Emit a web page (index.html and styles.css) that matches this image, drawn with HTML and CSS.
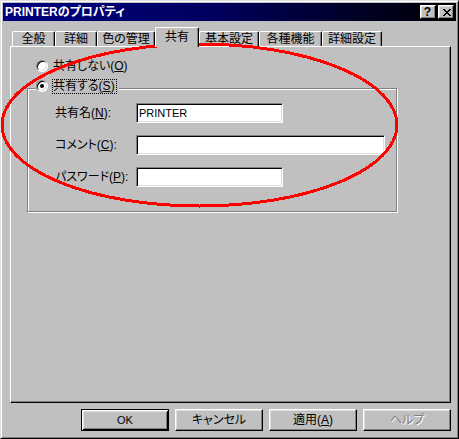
FILE: index.html
```html
<!DOCTYPE html>
<html lang="ja">
<head>
<meta charset="utf-8">
<title>PRINTERのプロパティ</title>
<link rel="stylesheet" href="styles.css">
</head>
<body>
<div class="window">
  <div class="titlebar">
    <span class="title">PRINTERのプロパティ</span>
    <div class="caption-buttons">
      <span class="cap-btn cap-help">?</span>
      <span class="cap-btn cap-close"><svg width="8" height="7" viewBox="0 0 8 7"><path fill="#000" d="M0 0h2v1H0zM6 0h2v1H6zM1 1h2v1H1zM5 1h2v1H5zM2 2h4v1H2zM3 3h2v1H3zM2 4h4v1H2zM1 5h2v1H1zM5 5h2v1H5zM0 6h2v1H0zM6 6h2v1H6z"/></svg></span>
    </div>
  </div>
  <div class="dialog-body">
    <div class="tabs">
      <span class="tab tab-general">全般</span>
      <span class="tab tab-detail">詳細</span>
      <span class="tab tab-color">色の管理</span>
      <span class="tab tab-share selected">共有</span>
      <span class="tab tab-basic">基本設定</span>
      <span class="tab tab-features">各種機能</span>
      <span class="tab tab-advanced">詳細設定</span>
    </div>
    <div class="panel">
      <div class="radio-row">
        <span class="radio"></span>
        <span class="radio-label">共有しない(<u>O</u>)</span>
      </div>
      <div class="group">
        <div class="legend">
          <span class="radio"><span class="dot"></span></span>
          <span class="radio-label focus">共有する(<u>S</u>)</span>
        </div>
        <div class="fields">
          <span class="field-label">共有名(<u>N</u>):</span>
          <span class="edit edit-short">PRINTER</span>
          <span class="field-label">コメント(<u>C</u>):</span>
          <span class="edit edit-long"></span>
          <span class="field-label">パスワード(<u>P</u>):</span>
          <span class="edit edit-short"></span>
        </div>
      </div>
    </div>
    <div class="buttons">
      <span class="btn default"><span class="latin">OK</span></span>
      <span class="btn">キャンセル</span>
      <span class="btn">適用(<u>A</u>)</span>
      <span class="btn disabled">ヘルプ</span>
    </div>
  </div>
  <svg class="annotation" width="459" height="439" viewBox="0 0 459 439">
    <ellipse cx="199.5" cy="125" rx="197.5" ry="81" fill="none" stroke="#ff0000" stroke-width="3" shape-rendering="crispEdges"/>
  </svg>
</div>
</body>
</html>
```

FILE: styles.css
```css
* {
  box-sizing: border-box;
}

html, body {
  margin: 0;
  padding: 0;
  background: #c0c0c0;
}

body {
  font-family: "Liberation Sans", "Noto Sans CJK JP", sans-serif;
  font-size: 12px;
  line-height: 14px;
  color: #000;
  font-feature-settings: "palt";
}

u {
  text-decoration: underline;
  text-underline-offset: 1px;
}

.window {
  position: relative;
  width: 459px;
  height: 439px;
  background: #c0c0c0;
  border: 1px solid;
  border-color: #dfdfdf #000 #000 #dfdfdf;
  box-shadow: inset 1px 1px #fff, inset -1px -1px #808080;
  padding: 2px;
  overflow: hidden;
}

.titlebar {
  height: 18px;
  display: flex;
  align-items: center;
  justify-content: space-between;
  padding: 0 2px 0 2px;
  background: linear-gradient(to right, #000080 0%, #000060 45%, #000000 100%);
}

.title {
  color: #fff;
  font-weight: bold;
  font-size: 12px;
  line-height: 14px;
  white-space: nowrap;
}

.caption-buttons {
  display: flex;
  gap: 2px;
}

.cap-btn {
  width: 16px;
  height: 14px;
  background: #c0c0c0;
  border: 1px solid;
  border-color: #fff #000 #000 #fff;
  box-shadow: inset -1px -1px #808080, inset 1px 1px #dfdfdf;
  display: flex;
  align-items: center;
  justify-content: center;
}

.cap-help {
  font-family: "Liberation Sans", sans-serif;
  font-weight: bold;
  font-size: 12px;
  line-height: 12px;
  padding-right: 1px;
}

.cap-close svg {
  display: block;
  margin-left: 1px;
}

.dialog-body {
  padding: 0 5px 0 7px;
}

.tabs {
  display: flex;
  align-items: flex-end;
  height: 19px;
  margin-top: 6px;
  padding-left: 2px;
}

.tab {
  position: relative;
  height: 15px;
  display: flex;
  align-items: center;
  justify-content: center;
  background: #c0c0c0;
  border-top: 1px solid #fff;
  border-left: 1px solid #fff;
  border-right: 1px solid #000;
  border-radius: 2px 2px 0 0;
  box-shadow: inset -1px 0 #808080;
  white-space: nowrap;
  line-height: 13px;
}

.tab.selected {
  height: 20px;
  margin-bottom: -1px;
  z-index: 1;
  padding-bottom: 1px;
}

.tab-general { width: 43px; }
.tab-detail { width: 42px; }
.tab-color { width: 58px; }
.tab-share { width: 44px; }
.tab-basic { width: 60px; }
.tab-features { width: 63px; }
.tab-advanced { width: 60px; }

.panel {
  height: 357px;
  border: 1px solid;
  border-color: #fff #000 #000 #fff;
  box-shadow: inset -1px -1px #808080;
  padding: 11px 0 0 16px;
}

.radio-row {
  display: flex;
  align-items: center;
  height: 16px;
  padding-left: 9px;
  gap: 4px;
}

.radio {
  width: 12px;
  height: 12px;
  flex: none;
  border-radius: 50%;
  border: 1px solid;
  border-color: #808080 #fff #fff #808080;
  box-shadow: inset 1px 1px #000, inset -1px -1px #dfdfdf;
  background: #fff;
  display: flex;
  align-items: center;
  justify-content: center;
}

.dot {
  width: 4px;
  height: 4px;
  border-radius: 50%;
  background: #000;
}

.radio-label {
  border: 1px solid transparent;
  padding: 0 1px 0 0;
  height: 15px;
  display: flex;
  align-items: center;
  white-space: nowrap;
}

.radio-label.focus {
  border: 1px dotted #000;
}

.group {
  width: 370px;
  height: 124px;
  margin-top: 14px;
  border: 1px solid #808080;
  box-shadow: inset 1px 1px #fff, 1px 1px #fff;
}

.legend {
  display: flex;
  align-items: center;
  gap: 4px;
  width: fit-content;
  height: 16px;
  margin: -11px 0 0 8px;
  padding-right: 2px;
  background: #c0c0c0;
}

.fields {
  display: grid;
  grid-template-columns: 81px auto;
  grid-auto-rows: 20px;
  row-gap: 12px;
  align-items: center;
  margin-top: 9px;
  padding-left: 27px;
}

.field-label {
  white-space: nowrap;
}

.edit {
  height: 20px;
  background: #fff;
  border: 1px solid;
  border-color: #808080 #fff #fff #808080;
  box-shadow: inset 1px 1px #000, inset -1px -1px #dfdfdf;
  padding: 0 2px;
  display: flex;
  align-items: center;
  font-family: "Liberation Sans", sans-serif;
  font-size: 11px;
}

.edit-short { width: 147px; }
.edit-long { width: 249px; }

.buttons {
  display: flex;
  justify-content: flex-end;
  gap: 6px;
  margin-top: 6px;
}

.btn {
  width: 88px;
  height: 22px;
  display: flex;
  align-items: center;
  justify-content: center;
  background: #c0c0c0;
  border: 1px solid;
  border-color: #fff #000 #000 #fff;
  box-shadow: inset -1px -1px #808080, inset 1px 1px #dfdfdf;
  white-space: nowrap;
}

.btn.default {
  border: 1px solid #000;
  box-shadow: inset 1px 1px #fff, inset -1px -1px #000, inset 2px 2px #dfdfdf, inset -2px -2px #808080;
}

.btn.disabled {
  color: #808080;
  text-shadow: 1px 1px #fff;
}

.latin {
  font-family: "Liberation Sans", sans-serif;
  font-size: 11px;
}

.annotation {
  position: absolute;
  left: -1px;
  top: -1px;
  pointer-events: none;
}
```
